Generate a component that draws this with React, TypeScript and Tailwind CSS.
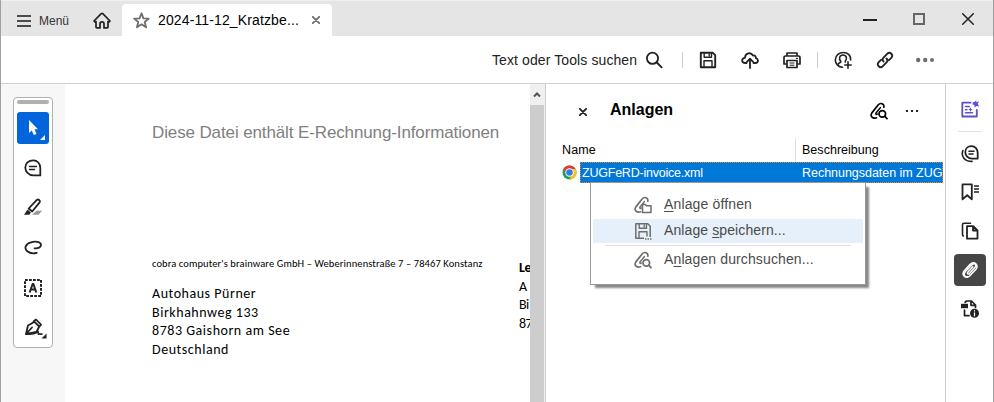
import type { ReactNode } from "react";

type IconProps = { children: ReactNode; className?: string; w?: number; h?: number };

function Icon({ children, className = "", w = 18, h = 18 }: IconProps) {
  return (
    <svg
      width={w}
      height={h}
      viewBox={`0 0 ${w} ${h}`}
      fill="none"
      stroke="currentColor"
      strokeWidth={1.8}
      strokeLinecap="round"
      strokeLinejoin="round"
      className={`block shrink-0 ${className}`}
    >
      {children}
    </svg>
  );
}

function Clip() {
  return (
    <>
      <path d="M6.500 15.800c-3.700 1.200-6.800-1.500-4.600-4.900L8.300 2.800c2.300-2.600 6.200-.8 5.500 2.400" strokeWidth={1.700} />
      <path d="M10.500 5.500 6 11c-.8 1.200.5 2 1.300 1" strokeWidth={1.400} />
    </>
  );
}

function ClipSearch() {
  return (
    <Icon>
      <Clip />
      <circle cx="12.300" cy="11.900" r="3.300" strokeWidth={1.700} />
      <path d="m14.800 14.400 2.200 2.200" />
    </Icon>
  );
}

function Floppy({ dots = false }: { dots?: boolean }) {
  return (
    <Icon>
      <path d="M1.800 1.800h12L16.200 4.200v12H1.800z" strokeWidth={dots ? 1.5 : 1.9} />
      <path d={dots ? "M5.200 2v4.200h7.300V2M10.200 3v1.800M5 16v-6.200h8V14" : "M5.200 2v4.200h7.300V2M10.200 3v1.800M5 16v-6.200h8V16"} strokeWidth={1.4} />
      {dots && (
        <>
          <path d="M10 15h8v3h-8z" fill="#e5f0fa" stroke="none" />
          <path d="M11 17h1.500M13.500 17h1.500M16 17h1.500" strokeWidth={1.300} strokeLinecap="butt" />
        </>
      )}
    </Icon>
  );
}

function TitleBar() {
  return (
    <header className="flex h-9 shrink-0 border-t border-[#f0f0f0] bg-[#e5e5e5] text-[#222]">
      <div className="flex w-[121px] items-center pl-4 pt-1">
        <Icon w={14} h={14} className="text-[#4b4b4b]">
          <path d="M0 2h14M0 7h14M0 12h14" strokeWidth={2} strokeLinecap="butt" />
        </Icon>
        <span className="ml-2 w-[54px] text-[12px] text-[#333]">Menü</span>
        <Icon w={18} h={17}>
          <path d="M1 9 8.200 1.700q.8-.7 1.600 0L17 9l-1.200 1.200-.8-.6V15q0 .9-.9.900H11v-4q0-2-2-2t-2 2v4H3.900q-.9 0-.9-.9V9.600l-.8.6z" strokeWidth={1.700} />
        </Icon>
      </div>
      <div className="mt-[3px] flex w-[210px] items-center rounded-t bg-white pl-[11px]">
        <Icon w={17} h={17} className="text-[#6e6e6e]">
          <path d="m8.500 1.300 2 5 5.300.3-4.100 3.400 1.400 5.300-4.600-3-4.600 3 1.400-5.300L1.200 6.600l5.300-.3z" />
        </Icon>
        <span className="ml-2 w-[154px] whitespace-nowrap text-[14px] tracking-[0.130px] text-black">2024-11-12_Kratzbe...</span>
        <Icon w={8} h={8} className="text-[#6e6e6e]">
          <path d="m.8.800 6.400 6.400M7.200.8.800 7.200" strokeWidth={1.800} />
        </Icon>
      </div>
      <div className="ml-auto flex items-center gap-9 pr-[19px]">
        <div className="mt-0.5 h-0.5 w-3.5 bg-[#222]" />
        <div className="size-3 border-2 border-[#666]" />
        <Icon w={12} h={12} className="ml-px">
          <path d="m.7.700 10.600 10.600M11.300.7.700 11.300" strokeWidth={1.500} />
        </Icon>
      </div>
    </header>
  );
}

function ToolBar() {
  return (
    <div className="flex h-12 shrink-0 items-center border-b border-[#cfcfcf] bg-white pl-[491px] text-[#222]">
      <span className="w-[153px] whitespace-nowrap text-[14px] tracking-[0.100px]">Text oder Tools suchen</span>
      <Icon>
        <circle cx="7.500" cy="7.300" r="5.600" />
        <path d="m11.800 11.500 4.800 4.800" strokeWidth={1.900} />
      </Icon>
      <div className="ml-[19px] h-4 w-px bg-[#ccc]" />
      <div className="ml-4 flex gap-6">
        <Floppy />
        <Icon>
          <path d="M5.500 12H4.300C.2 12 .2 7 4 6.800 4.200 2 9.800.7 12 4.500c2.200-.4 3 1 2.800 2.600C18 7.900 17.400 12 14.300 12h-1.700" />
          <path d="M9 17V8M5.900 10.800 9 7.700l3.100 3.100" />
        </Icon>
        <Icon>
          <path d="M4 5V2h10v3M4 13H1V6.500Q1 5 2.500 5h13Q17 5 17 6.500V13h-3M4 9.500h10v7H4z" strokeWidth={1.700} />
          <path d="M7 12h4M7 14.200h4" strokeWidth={1} />
          <path d="M13.500 7.300h1" strokeWidth={1.200} />
        </Icon>
      </div>
      <div className="ml-4 h-4 w-px bg-[#ccc]" />
      <div className="ml-4 flex items-center gap-6">
        <Icon>
          <path d="M16.600 9C17.500-1 1.500-.8 1.300 9c0 3.500 3 7 7.200 7.300" strokeWidth={1.600} />
          <path d="M4 13.500c.8-2 3-1.500 2.800-3C4.500 7.500 5.500 4 9 4s4.500 3.500 2.300 6.300v.8M14 10.800v6.400M10.800 14h6.400" strokeWidth={1.600} />
        </Icon>
        <Icon>
          <path d="M7.500 10.500c-1.400-1.400-1-3 .2-4.200l3.500-3.500c3-2.600 6.600 1 4.100 4l-2.400 2.400M10.500 7.500c1.400 1.400 1 3-.2 4.200l-3.500 3.500c-3 2.600-6.600-1-4.100-4l2.400-2.400" strokeWidth={1.900} />
        </Icon>
        <Icon className="-ml-0.5 text-[#6e6e6e]">
          <g fill="currentColor" stroke="none">
            <circle cx="2.200" cy="9" r="2.200" />
            <circle cx="9.200" cy="9" r="2.200" />
            <circle cx="16" cy="9" r="2" />
          </g>
        </Icon>
      </div>
    </div>
  );
}

function ToolPalette() {
  return (
    <div className="w-16 shrink-0 bg-[#f7f7f7] pl-3 pt-[13px] text-[#222]">
      <div className="flex h-[251px] w-10 flex-col items-center rounded border border-[#b0b0b0] bg-white">
        <div className="mt-0.5 h-1 w-8 rounded-sm bg-[#b0b0b0]" />
        <div className="mt-2 h-8 w-8 rounded-[3px] bg-[#0265dc] text-white">
          <Icon w={32} h={32}>
            <path d="M12 8v13l2.800-2.600 2 4.600 2.700-1.100-2-4.700H21z" fill="currentColor" stroke="none" />
            <path d="M28 23v5h-5z" fill="currentColor" stroke="none" />
          </Icon>
        </div>
        <Icon className="mt-[15px]">
          <path d="M9.300 1.300C4.500 1.300 1.300 4.500 1.300 8.500c0 4 3 7.900 8.200 7.900H16.300V9c0-4.400-3-7.700-7-7.700z" strokeWidth={1.800} />
          <path d="M5.500 7.500h7M5.500 10.500h5" strokeWidth={1.400} />
        </Icon>
        <Icon className="mt-[21px]">
          <path d="M8 16.800h6.500l3.500-4h-5.500z" fill="#999" stroke="none" />
          <path d="m4.700 10.500 8.100-8.600c1.800-1.200 4 .8 2.600 2.700L8.200 13.500z" />
          <path d="m3.600 11.600 3.300 3-1.700 2.200H0z" fill="currentColor" stroke="none" />
        </Icon>
        <Icon className="mt-[22px]">
          <path d="M10.500 10.300c3.500.3 6.500-1 6.500-3.300 0-3.600-6.300-3.900-10.200-2.600-5.300 1.500-7 6-3.500 8.900 2.400 2 6.300 2.300 9.400 1.500" strokeWidth={1.800} />
        </Icon>
        <Icon className="mt-[23px]">
          <rect x="1" y="1" width="16" height="16" strokeWidth={2} strokeDasharray="2.800 1.200" strokeLinecap="butt" />
          <path d="M5.700 13.500 8.600 5h.8l2.900 8.500M6.700 10.500h4.600" strokeWidth={2} strokeLinecap="butt" />
        </Icon>
        <Icon w={24} h={22} className="ml-1.5 mt-5">
          <path d="M2 17 4 8.500l6.500-3.700 4.700 4.700-2.700 5.500zM9.500 4.500 12 2.500l5 5.200-1.800 2.300M2 17l6-6.500" />
          <path d="M2 17c4 .3 8 1 11.500-2.300 1.500-.8 0 3.300 1.500 2.300.8-.8 1.300.5 3 0" strokeWidth={1.600} />
          <path d="M22.500 16.500v5h-5z" fill="currentColor" stroke="none" />
        </Icon>
      </div>
    </div>
  );
}

function Document() {
  return (
    <main className="flex w-[465px] shrink-0 justify-between bg-white pl-[87px] text-black">
      <div className="w-[350px] shrink-0 whitespace-nowrap">
        <p className="pt-[39px] text-[17px] leading-5 tracking-[-0.120px] text-[#808080]">
          Diese Datei enthält E-Rechnung-Informationen
        </p>
        <p className="mt-[114px] font-[Carlito,Lato,sans-serif] text-[10.500px] leading-[14px] tracking-[0.100px]">
          cobra computer's brainware GmbH – Weberinnenstraße 7 – 78467 Konstanz
        </p>
        <address className="mt-[14px] font-[Carlito,Lato,sans-serif] text-[14px] not-italic leading-[18.700px] tracking-[0.540px]">
          Autohaus Pürner
          <br />
          Birkhahnweg 133
          <br />
          8783 Gaishorn am See
          <br />
          Deutschland
        </address>
      </div>
      <div className="w-[11px] shrink-0 whitespace-nowrap pt-[175px] font-[Carlito,Lato,sans-serif] text-[14px] leading-[18.700px] tracking-[-0.500px]">
        <b>Le</b>
        <br />
        A
        <br />
        Bi
        <br />
        87
      </div>
    </main>
  );
}

function ScrollBar() {
  return (
    <div className="relative w-4 shrink-0 border-r border-[#cfcfcf] bg-[#f0f0f0]">
      <div className="flex h-[21px] items-center justify-center pr-0.5 text-[#555]">
        <Icon w={8} h={6}>
          <path d="m1 4.500 3-3 3 3" strokeWidth={2} strokeLinecap="butt" strokeLinejoin="miter" />
        </Icon>
      </div>
      <div className="h-[300px] w-3.5 bg-[#cdcdcd]" />
    </div>
  );
}

function ChromeLogo() {
  return (
    <svg width="15" height="15" viewBox="0 0 16 16" className="block shrink-0">
      <circle cx="8" cy="8" r="7.500" fill="#1fa055" />
      <path d="M1.500 4.200A7.500 7.500 0 0 1 14.500 4.300H8L4.800 10z" fill="#e33b2e" />
      <path d="M14.500 4.300A7.500 7.500 0 0 1 7.700 15.500L11.200 10V4.300z" fill="#fcc31e" />
      <circle cx="8" cy="8" r="4.500" fill="#fff" />
      <circle cx="8" cy="8" r="3.500" fill="#2f7de9" />
    </svg>
  );
}

function ContextMenu() {
  return (
    <div className="absolute left-[44px] top-[98px] flex h-[103px] w-[276px] flex-col border border-[#979797] bg-white px-0.5 text-[14px] text-[#4b4b4b] shadow-[4px_4px_2px_-1px_#888]">
      <div className="mt-2 flex h-[27px] items-center pl-[41px] text-[#6e6e6e]">
        <Icon>
          <Clip />
          <path d="M8.500 8.500h3l1 1.300h4.500V16.500H8.500z" fill="white" strokeWidth={1.500} />
        </Icon>
        <span className="-mt-0.5 ml-3 tracking-[0.140px] text-[#4b4b4b]"><u className="underline-offset-2">A</u>nlage öffnen</span>
      </div>
      <div className="mt-px flex h-6 items-center bg-[#e5f0fa] pl-[41px] text-[#6e6e6e]">
        <Floppy dots />
        <span className="-mt-0.5 ml-3 tracking-[0.100px] text-[#4b4b4b]">Anlage <u className="underline-offset-2">s</u>peichern...</span>
      </div>
      <div className="mx-3 mt-0.5 h-px bg-[#dedede]" />
      <div className="flex h-[28px] items-center pl-[41px] text-[#6e6e6e]">
        <ClipSearch />
        <span className="-mt-0.5 ml-3 tracking-[0.120px] text-[#4b4b4b]">A<u className="underline-offset-2">n</u>lagen durchsuchen...</span>
      </div>
    </div>
  );
}

function AttachmentsPanel() {
  return (
    <section className="relative w-[399px] shrink-0 bg-white text-black">
      <div className="flex h-[54px] items-center pl-[33px]">
        <Icon w={8} h={8} className="mt-0.5 text-[#222]">
          <path d="m.9.900 6.200 6.200M7.100.9.900 7.100" strokeWidth={1.900} />
        </Icon>
        <h2 className="-mt-0.5 ml-[23px] w-[260px] text-[16px] font-bold">Anlagen</h2>
        <ClipSearch />
        <Icon w={14} h={4} className="ml-[17px] text-[#222]">
          <path d="M1 2h2M6 2h2M11 2h2" strokeLinecap="butt" strokeWidth={2} />
        </Icon>
      </div>
      <div className="flex h-6 text-[12.500px]">
        <span className="flex w-[249px] items-center pl-4 tracking-[0.100px]">Name</span>
        <span className="flex items-center border-l border-[#e0e0e0] pl-1.5 tracking-[0.030px]">Beschreibung</span>
      </div>
      <div className="flex h-[21px] items-center pl-4 text-[12.500px] text-white">
        <ChromeLogo />
        <div className="ml-[3px] flex h-[21px] w-[363px] items-center whitespace-nowrap border border-dotted border-[#f08428] bg-[#0078d7]">
          <span className="w-[221px] shrink-0 pl-px pt-px tracking-[-0.220px]">ZUGFeRD-invoice.xml</span>
          <span className="pt-px tracking-[-0.030px]">Rechnungsdaten im ZUG</span>
        </div>
      </div>
      <ContextMenu />
    </section>
  );
}

function SideRail() {
  return (
    <nav className="flex w-[48px] shrink-0 flex-col items-center border-l border-[#cfcfcf] bg-white pt-4 text-[#222]">
      <Icon className="text-[#5a4fd0]">
        <path d="M9.500 2.700H1.300v13.800h14.500V10" />
        <path d="M4.500 6.500h4M4.500 12.800h7M4.500 9.700h1.500" strokeWidth={1.400} />
        <path d="M10.700 1.500 13 2.300 15.200.5l.2 1.700 2.800-.7-1.500 2.300 1.500 2.700-2.700-.6-1.800 1.700-.4-2.500-2.500-1 1.700-1.200z" fill="currentColor" stroke="none" />
        <path d="m9.500 7.300.7 1.600 1.600.7-1.600.7-.7 1.600-.7-1.600-1.600-.7 1.600-.7z" fill="currentColor" stroke="none" />
      </Icon>
      <div className="mt-[13px] h-px w-6 bg-[#e0e0e0]" />
      <Icon className="mt-[13px]">
        <path d="M10.500 1.200c-3.800 0-6.200 2.700-6.200 6 0 3.300 2.600 6.400 6.700 6.400h5.700V8c0-3.900-2.500-6.800-6.200-6.800z" />
        <path d="M1.900 5.500C-.2 11.500 3.500 16.500 11 16.400M8 6.200h5M8 9h4" strokeWidth={1.600} />
      </Icon>
      <Icon className="mt-5">
        <path d="M1.500 1.300h9.300V16.300L6.200 12.300l-4.700 4z" />
        <path d="M13 3h5M13 6h5M13 9h5" strokeWidth={1.500} strokeLinecap="butt" />
      </Icon>
      <Icon className="mt-[21px]">
        <path d="M6 4.200h6.200l4.300 4.300v8.200H6zM12 4.500v4h4.300" />
        <path d="M2.500 14q-1 0-1-1.500V2.700Q1.500 1.200 3 1.200h6.500" strokeWidth={1.600} />
      </Icon>
      <div className="mt-3.5 flex size-8 items-center justify-center rounded bg-[#464646] text-white">
        <Icon>
          <path
            d="M11.800 5.800 6.800 11.300c-1 1.300.5 2.400 1.600 1.300l5.700-6.400c2-2.500-.8-4.600-3-2.500L4.200 10.800c-3 4 1.300 7 4.400 4.200L15 8.300c2.200-3 .6-6.300-2.500-6.500"
            strokeWidth={1.500}
          />
          <path d="M12.500 1.800c-1.300 0-2.300.5-3.200 1.500L3.200 10c-2.500 3.500.3 6.500 3.400 5.800" strokeWidth={1.800} />
        </Icon>
      </div>
      <Icon className="mt-3.5">
        <path d="M4 2.300 5.500 1H10.500l4 4v2.500M3.500 10v5.700H8M10 1.500V5.300h4.500" strokeWidth={1.700} />
        <path d="M0 3.800h7v4.400H0z" fill="currentColor" stroke="none" />
        <circle cx="13.500" cy="13.300" r="4.500" fill="currentColor" stroke="none" />
        <path d="M13.500 12.800v3M13.500 10.700v.2" stroke="white" strokeWidth={1.200} />
      </Icon>
    </nav>
  );
}

export default function App() {
  return (
    <div className="flex h-[402px] w-[994px] flex-col overflow-hidden border-x border-[#a0a0a0] bg-white font-['Liberation_Sans',Arial,sans-serif] leading-none">
      <TitleBar />
      <ToolBar />
      <div className="flex min-h-0 flex-1">
        <ToolPalette />
        <Document />
        <ScrollBar />
        <AttachmentsPanel />
        <SideRail />
      </div>
    </div>
  );
}
